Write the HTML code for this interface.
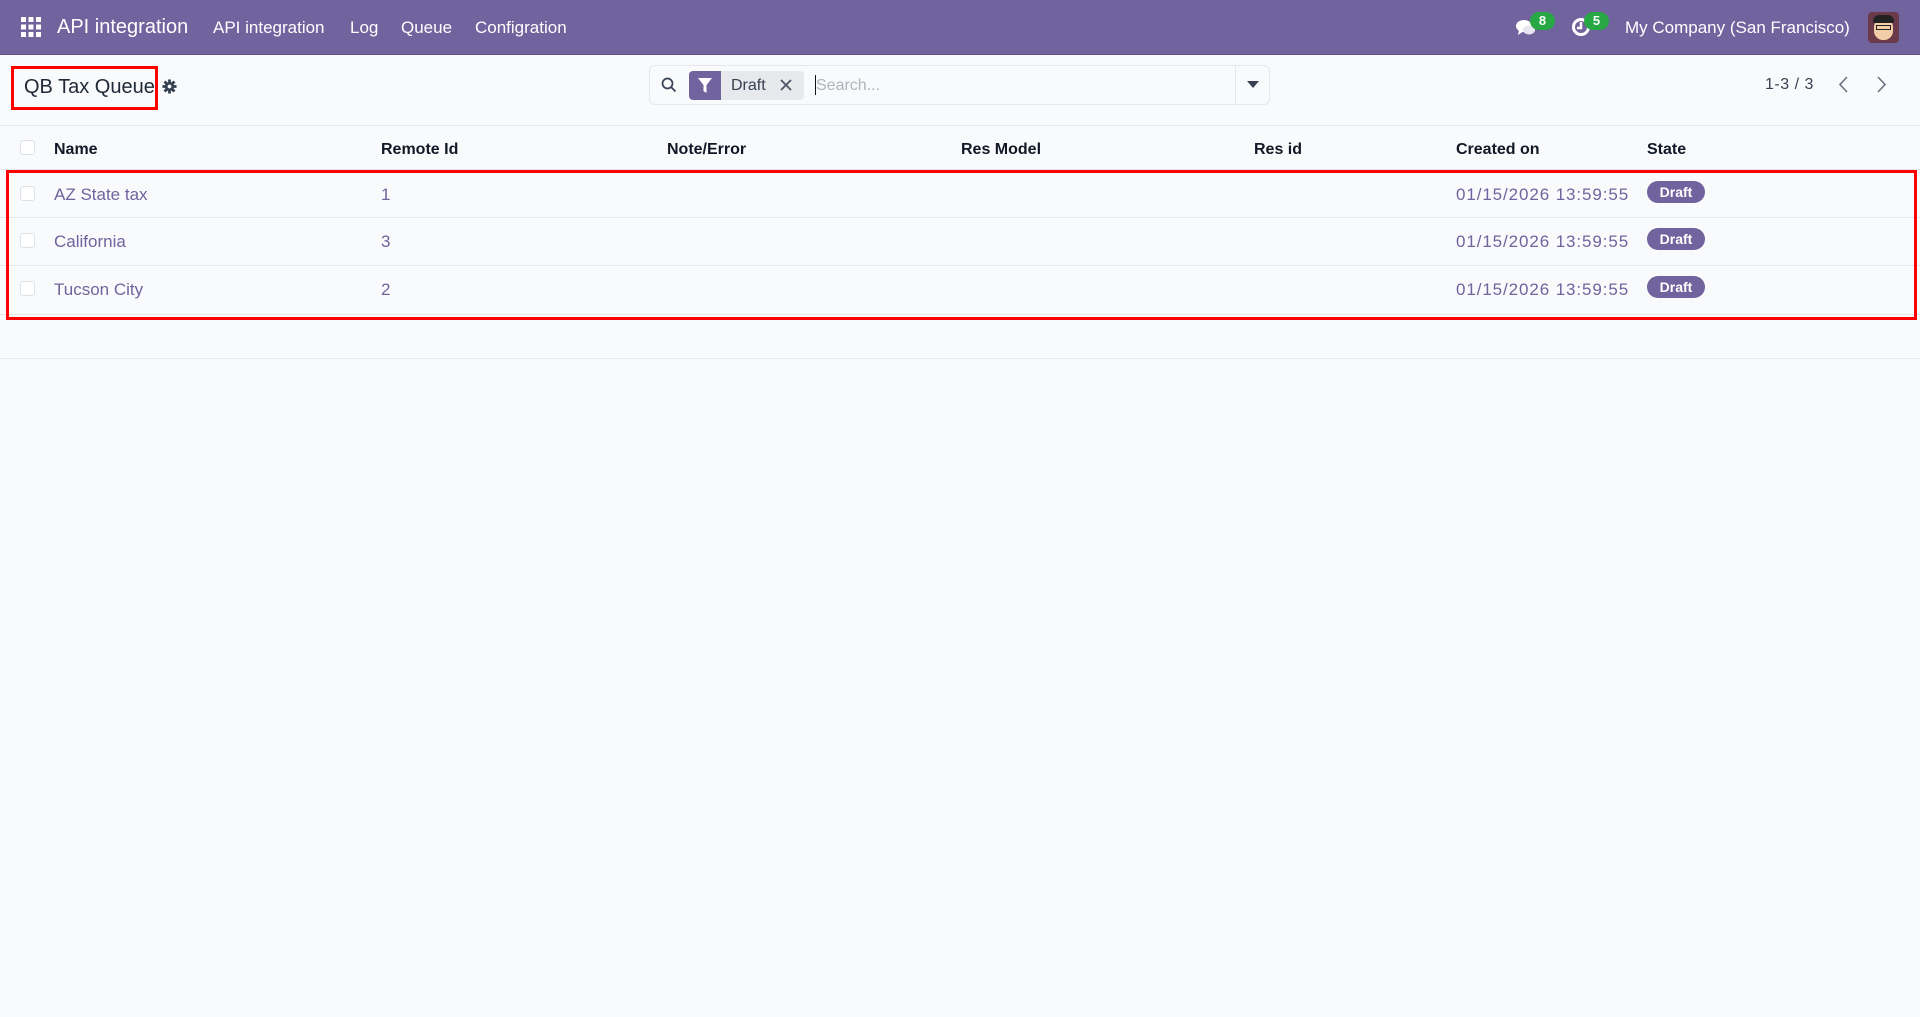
<!DOCTYPE html>
<html><head><meta charset="utf-8"><style>
*{margin:0;padding:0;box-sizing:border-box}
body{width:1920px;height:1017px;background:#f9fafb;font-family:"Liberation Sans",Arial,sans-serif;color:#374151;position:relative;overflow:hidden}
.a{position:absolute;white-space:nowrap}
.nav{position:absolute;left:0;top:0;width:1920px;height:55px;background:#71639e;border-bottom:1px solid #5e5187}
.nav .a{color:#fff;font-size:17px;top:18px}
.th{top:141px;font-size:16px;color:#111827;font-weight:bold}
.td{font-size:17px;color:#71639e}
.dt{letter-spacing:0.9px}
.line{position:absolute;left:0;width:1920px;height:1px;background:#e5e7eb}
.cb{position:absolute;left:20px;width:15px;height:15px;border:1px solid #dee2e6;border-radius:3px;background:#fff}
.badge{position:absolute;left:1647px;width:58px;height:22px;border-radius:11px;background:#71639e;color:#fff;font-size:14px;font-weight:bold;text-align:center;line-height:22px}
</style></head><body>
<div class="nav">
  <svg class="a" style="left:21px;top:17px" width="20" height="20" viewBox="0 0 20 20" fill="#fff">
    <rect x="0" y="0" width="5" height="5"/><rect x="7.5" y="0" width="5" height="5"/><rect x="15" y="0" width="5" height="5"/>
    <rect x="0" y="7.5" width="5" height="5"/><rect x="7.5" y="7.5" width="5" height="5"/><rect x="15" y="7.5" width="5" height="5"/>
    <rect x="0" y="15" width="5" height="5"/><rect x="7.5" y="15" width="5" height="5"/><rect x="15" y="15" width="5" height="5"/>
  </svg>
  <div class="a" style="left:57px;top:16px;font-size:20px">API integration</div>
  <div class="a" style="left:213px">API integration</div>
  <div class="a" style="left:350px">Log</div>
  <div class="a" style="left:401px">Queue</div>
  <div class="a" style="left:475px">Configration</div>
  <svg class="a" style="left:1515px;top:18px" width="22" height="20" viewBox="0 0 22 20" fill="#fff"><ellipse cx="9" cy="8" rx="8" ry="6"/><path d="M4 12 L3 17 L9 13Z"/><ellipse cx="14" cy="12" rx="6" ry="4.5" fill="#e9e6f1"/></svg>
  <div class="a" style="left:1530px;top:12px;width:25px;height:18px;border-radius:9px;background:#28a745;font-size:13px;text-align:center;line-height:18px;font-weight:bold">8</div>
  <svg class="a" style="left:1571px;top:17px" width="20" height="20" viewBox="0 0 20 20"><circle cx="10" cy="10" r="7.5" fill="none" stroke="#fff" stroke-width="3"/><path d="M10 5v6h-4" stroke="#fff" stroke-width="2.5" fill="none"/></svg>
  <div class="a" style="left:1584px;top:12px;width:25px;height:18px;border-radius:9px;background:#28a745;font-size:13px;text-align:center;line-height:18px;font-weight:bold">5</div>
  <div class="a" style="left:1625px">My Company (San Francisco)</div>
  <div class="a" style="left:1868px;top:12px;width:31px;height:31px;border-radius:4px;background:#6b3a4a;overflow:hidden">
    <div style="position:absolute;left:6px;top:6px;width:19px;height:22px;border-radius:9px;background:#f2cfa8"></div>
    <div style="position:absolute;left:5px;top:3px;width:21px;height:8px;border-radius:6px 6px 2px 2px;background:#222"></div>
    <div style="position:absolute;left:8px;top:13px;width:15px;height:5px;border:1.5px solid #222"></div>
  </div>
</div>

<div class="a" style="left:11px;top:66px;width:147px;height:44px;border:3px solid #f00"></div>
<div class="a" style="left:24px;top:76px;font-size:20px;color:#1f2937">QB Tax Queue</div>
<svg class="a" style="left:162px;top:79px" width="15" height="15" viewBox="0 0 16 16"><g fill="#374151"><circle cx="8" cy="8" r="5"/><rect x="6.5" y="0.5" width="3" height="15"/><rect x="0.5" y="6.5" width="15" height="3"/><rect x="6.5" y="0.5" width="3" height="15" transform="rotate(45 8 8)"/><rect x="6.5" y="0.5" width="3" height="15" transform="rotate(-45 8 8)"/></g><circle cx="8" cy="8" r="2" fill="#f9fafb"/></svg>

<div class="a" style="left:649px;top:65px;width:621px;height:40px;border:1px solid #e5e7eb;border-radius:6px;background:#f9fafb"></div>
<svg class="a" style="left:661px;top:77px" width="16" height="16" viewBox="0 0 16 16"><circle cx="6.5" cy="6.5" r="5" fill="none" stroke="#374151" stroke-width="1.7"/><path d="M10 10l4.5 4.5" stroke="#374151" stroke-width="1.8"/></svg>
<div class="a" style="left:689px;top:71px;width:115px;height:29px;border-radius:4px;background:#e7e9ed"></div>
<div class="a" style="left:689px;top:71px;width:32px;height:29px;border-radius:4px 0 0 4px;background:#71639e"></div>
<svg class="a" style="left:698px;top:78px" width="14" height="15" viewBox="0 0 14 15"><path d="M0 0h14L8.5 7v8L5.5 13V7Z" fill="#fff"/></svg>
<div class="a" style="left:731px;top:77px;font-size:16px;color:#374151">Draft</div>
<svg class="a" style="left:780px;top:79px" width="12" height="12" viewBox="0 0 12 12"><path d="M1 1l10 10M11 1L1 11" stroke="#4b5563" stroke-width="1.8"/></svg>
<div class="a" style="left:815px;top:75px;width:1px;height:20px;background:#111"></div>
<div class="a" style="left:816px;top:77px;font-size:16px;color:#adb5bd">Search...</div>
<div class="a" style="left:1235px;top:66px;width:1px;height:38px;background:#e5e7eb"></div>
<svg class="a" style="left:1247px;top:81px" width="12" height="8" viewBox="0 0 12 8"><path d="M0 0h12L6 7Z" fill="#374151"/></svg>

<div class="a" style="left:1765px;top:76px;font-size:16px;color:#374151;letter-spacing:0.5px">1-3 / 3</div>
<svg class="a" style="left:1838px;top:76px" width="10" height="17" viewBox="0 0 10 17"><path d="M9 1L2 8.5L9 16" fill="none" stroke="#6b7280" stroke-width="1.6"/></svg>
<svg class="a" style="left:1877px;top:76px" width="10" height="17" viewBox="0 0 10 17"><path d="M1 1l7 7.5L1 16" fill="none" stroke="#6b7280" stroke-width="1.6"/></svg>

<div class="line" style="top:125px"></div>
<div class="cb" style="top:140px"></div>
<div class="a th" style="left:54px">Name</div>
<div class="a th" style="left:381px">Remote Id</div>
<div class="a th" style="left:667px">Note/Error</div>
<div class="a th" style="left:961px">Res Model</div>
<div class="a th" style="left:1254px">Res id</div>
<div class="a th" style="left:1456px">Created on</div>
<div class="a th" style="left:1647px">State</div>
<div class="line" style="top:169px"></div>

<div class="cb" style="top:186px"></div>
<div class="a td" style="left:54px;top:185px">AZ State tax</div>
<div class="a td" style="left:381px;top:185px">1</div>
<div class="a td dt" style="left:1456px;top:185px">01/15/2026 13:59:55</div>
<div class="badge" style="top:181px">Draft</div>
<div class="line" style="top:217px"></div>

<div class="cb" style="top:233px"></div>
<div class="a td" style="left:54px;top:232px">California</div>
<div class="a td" style="left:381px;top:232px">3</div>
<div class="a td dt" style="left:1456px;top:232px">01/15/2026 13:59:55</div>
<div class="badge" style="top:228px">Draft</div>
<div class="line" style="top:265px"></div>

<div class="cb" style="top:281px"></div>
<div class="a td" style="left:54px;top:280px">Tucson City</div>
<div class="a td" style="left:381px;top:280px">2</div>
<div class="a td dt" style="left:1456px;top:280px">01/15/2026 13:59:55</div>
<div class="badge" style="top:276px">Draft</div>
<div class="line" style="top:314px"></div>

<div class="a" style="left:6px;top:170px;width:1911px;height:150px;border:3px solid #f00"></div>
<div class="line" style="top:358px"></div>
</body></html>
